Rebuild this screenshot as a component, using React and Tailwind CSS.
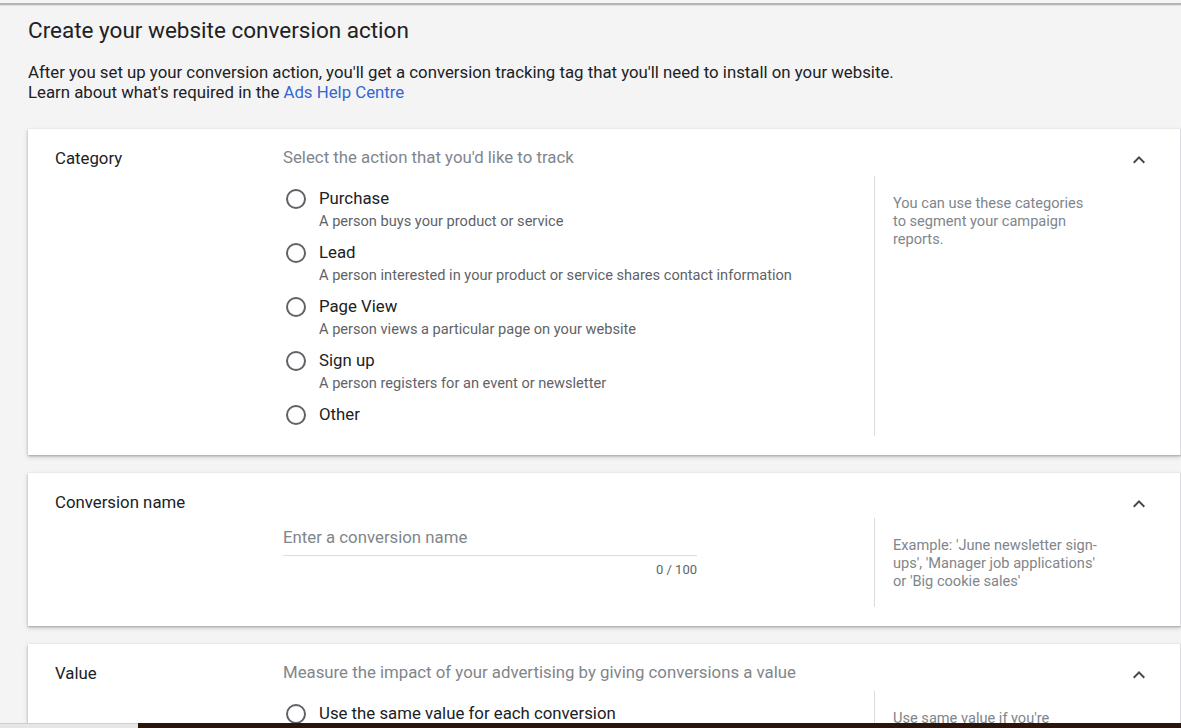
import React from "react";

function Chevron() {
  return (
    <svg viewBox="0 0 24 24" className="w-6 h-6 shrink-0 mt-[3px]" fill="#44474b">
      <path d="M12 8l-6 6 1.41 1.41L12 10.83l4.59 4.58L18 14z" />
    </svg>
  );
}

function Radio({ label, desc }) {
  return (
    <div className="flex items-start">
      <div className="w-5 h-5 ml-[3px] mt-[3px] rounded-full border-2 border-[#5f6368] shrink-0"></div>
      <div className="ml-[13px] flex flex-col">
        <div className="text-[16.8px] leading-6 text-[#202124]">{label}</div>
        {desc && (
          <div className="text-[14.6px] leading-5 pt-[1px] text-[#5f6368]">{desc}</div>
        )}
      </div>
    </div>
  );
}

function Card({ label, header, bodyTop, children, help }) {
  return (
    <div className="bg-white flex pl-[27px] pt-[16px] pb-[19px] border-r border-[#dadce0] shadow-[0_1px_2px_rgba(60,64,67,0.35),0_2px_5px_rgba(60,64,67,0.2)]">
      <div className="w-[228px] shrink-0 pt-[1px] text-[16.8px] leading-6 text-[#202124]">
        {label}
      </div>
      <div className="flex-1 flex flex-col">
        <div className="flex items-start justify-between pr-[29px]">
          <div className="text-[16.8px] leading-6 text-[#80868b]">{header}</div>
          <Chevron />
        </div>
        <div className={"flex " + bodyTop}>
          <div className="w-[591px] shrink-0">{children}</div>
          <div className="flex-1 border-l border-[#dadce0] pl-[18px] pt-[18px] text-[14.6px] leading-[18px] text-[#80868b] whitespace-nowrap">
            {help}
          </div>
        </div>
      </div>
    </div>
  );
}

const categories = [
  { label: "Purchase", desc: "A person buys your product or service" },
  {
    label: "Lead",
    desc: "A person interested in your product or service shares contact information",
  },
  { label: "Page View", desc: "A person views a particular page on your website" },
  { label: "Sign up", desc: "A person registers for an event or newsletter" },
  { label: "Other" },
];

export default function App() {
  return (
    <div
      className="min-h-screen bg-[#f4f4f4] pt-[3px]"
      style={{ fontFamily: "Roboto, 'Noto Sans', sans-serif" }}
    >
      <div className="border-t-2 border-[#b4b4b4] shadow-[0_1px_1px_rgba(0,0,0,0.08)]"></div>
      <div className="pl-[28px]">
        <h1 className="mt-[11px] text-[22.5px] leading-7 text-[#202124]">
          Create your website conversion action
        </h1>
        <p className="mt-[18px] text-[16.8px] leading-5 text-[#202124]">
          After you set up your conversion action, you'll get a conversion tracking tag that you'll need to install on your website.
          <br />
          Learn about what's required in the{" "}
          <a className="text-[#3367d6]">Ads Help Centre</a>
        </p>

        <div className="mt-[27px] flex flex-col gap-[18px] pb-10">
          <Card
            label="Category"
            header="Select the action that you'd like to track"
            bodyTop="mt-[4px]"
            help={
              <>
                You can use these categories
                <br />
                to segment your campaign
                <br />
                reports.
              </>
            }
          >
            <div className="flex flex-col gap-[9px] py-[10px]">
              {categories.map((c) => (
                <Radio key={c.label} label={c.label} desc={c.desc} />
              ))}
            </div>
          </Card>

          <Card
            label="Conversion name"
            header=""
            bodyTop="mt-[2px]"
            help={
              <>
                Example: 'June newsletter sign-
                <br />
                ups', 'Manager job applications'
                <br />
                or 'Big cookie sales'
              </>
            }
          >
            <div className="w-[414px] pb-[29px]">
              <div className="pt-[7px] pb-[6px] border-b border-[#dadce0] text-[16.8px] leading-6 text-[#80868b]">
                Enter a conversion name
              </div>
              <div className="mt-[6px] text-[13px] leading-4 text-right text-[#5f6368]">
                0 / 100
              </div>
            </div>
          </Card>

          <Card
            label="Value"
            header="Measure the impact of your advertising by giving conversions a value"
            bodyTop="mt-[4px]"
            help={
              <>
                Use same value if you're
                <br />
                tracking conversions that are
                <br />
                equally valuable
              </>
            }
          >
            <div className="flex flex-col gap-[9px] py-[10px]">
              <Radio
                label="Use the same value for each conversion"
                desc="Each conversion counts for the same amount"
              />
              <Radio
                label="Use different values for each conversion"
                desc="Values are set by your tag or website"
              />
              <Radio label="Don't use a value for this conversion action" />
            </div>
          </Card>
        </div>
      </div>

      <div className="fixed left-0 right-0 bottom-0 h-[5px] flex">
        <div className="w-[138px] bg-[#e6e6e6] border-t border-[#cfcfcf]"></div>
        <div className="flex-1 bg-[#2b150b]"></div>
      </div>
    </div>
  );
}
